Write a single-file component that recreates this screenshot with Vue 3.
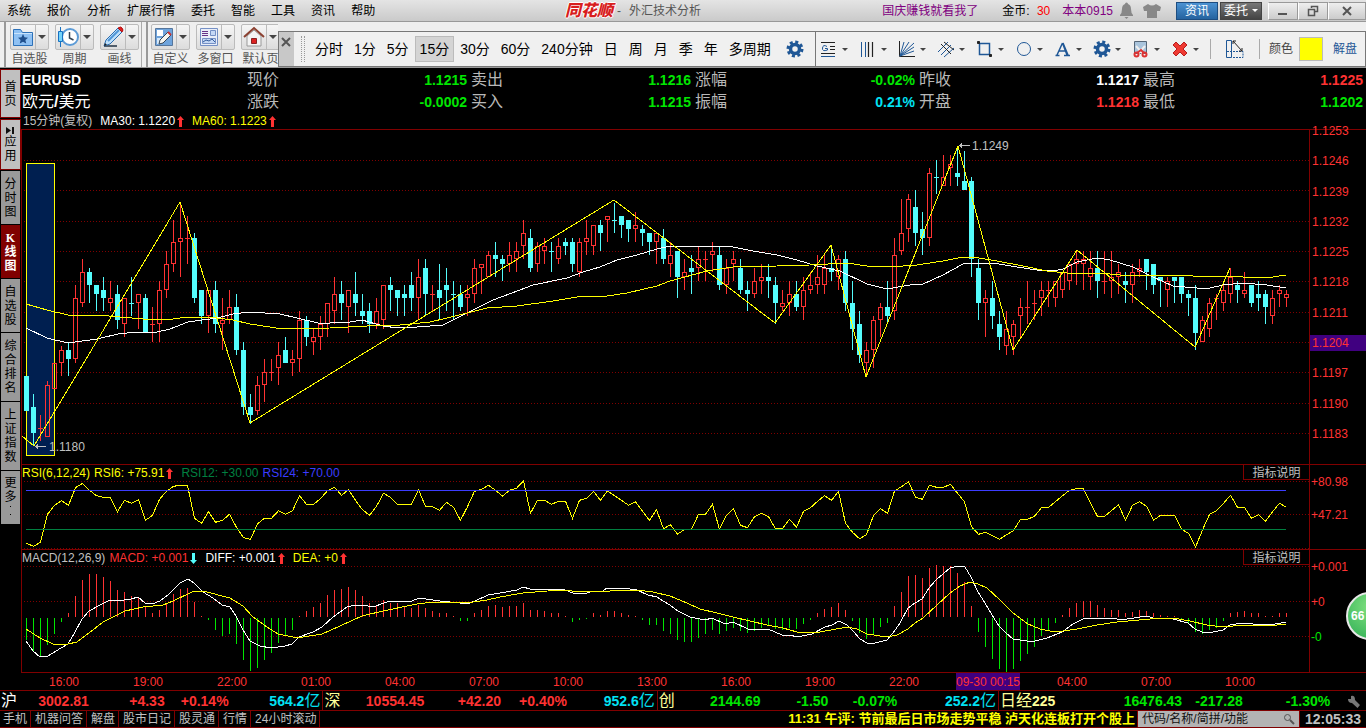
<script setup>
import { ref } from 'vue'

const menus = ['系统', '报价', '分析', '扩展行情', '委托', '智能', '工具', '资讯', '帮助']
const periods = ['分时', '1分', '5分', '15分', '30分', '60分', '240分钟', '日', '周', '月', '季', '年', '多周期']
const period = ref('15分')
const drawTools = ['text', 'bars', 'fan', 'channel', 'rect', 'circle', 'letter', 'gear', 'cut', 'remove']
const color = ref('#ffff00')
const query = ref('')

const tabs = [
  { name: '首页', kind: 'home', h: 49 },
  { name: '应用', kind: 'apps', h: 51 },
  { name: '分时图', kind: '', h: 53 },
  { name: 'K线图', kind: 'active', h: 53 },
  { name: '自选股', kind: '', h: 53 },
  { name: '综合排名', kind: '', h: 68 },
  { name: '上证指数', kind: '', h: 68 },
  { name: '更多', kind: 'more', h: 53 }
]

const quotes = [
  ['现价', '1.1215', 'down'], ['卖出', '1.1216', 'down'], ['涨幅', '-0.02%', 'down'], ['昨收', '1.1217', 'flat'], ['最高', '1.1225', 'up'],
  ['涨跌', '-0.0002', 'down'], ['买入', '1.1215', 'down'], ['振幅', '0.21%', 'info'], ['开盘', '1.1218', 'up'], ['最低', '1.1202', 'down']
]

const markets = [
  { id: 'sh', name: '沪', values: ['3002.81', '+4.33', '+0.14%'], vol: '564.2', dir: 'up' },
  { id: 'sz', name: '深', values: ['10554.45', '+42.20', '+0.40%'], vol: '952.6', dir: 'up' },
  { id: 'cy', name: '创', values: ['2144.69', '-1.50', '-0.07%'], vol: '252.2', dir: 'down' },
  { id: 'nk', name: '日经', code: '225', values: ['16476.43', '-217.28', '-1.30%'], vol: '', dir: 'down' }
]
const links = ['手机', '机器问答', '解盘', '股市日记', '股灵通', '行情', '24小时滚动']
const times = ['16:00', '19:00', '22:00', '01:00', '04:00', '07:00', '10:00', '13:00', '16:00', '19:00', '22:00', '09-30 00:15', '04:00', '07:00', '10:00']
const prices = ['1.1253', '1.1246', '1.1239', '1.1232', '1.1225', '1.1218', '1.1211', '1.1204', '1.1197', '1.1190', '1.1183']
const gridY = [160, 190, 221, 251, 281, 312, 342, 372, 403, 433]

// High, open, close, low in pips above 1.1180; a trailing "c" marks a falling doji.
const candles = `16 16 8 8,12 9 3 0,7 4 4 1,15 2 14 2,19 13 19 13,23 19 22 16,24 22 20 16,37 20 34 19,43 33 40 32,41 40 37 33,
37 37 35 31,39 36 34 31,38 33 34 31,37 35 29 27,34 28 34 25,39 33 33 30 c,35 33 35 27,35 34 26 26,32 28 28 24,38 28 36 24,
45 36 42 34,52 42 47 40,56 47 48 39,53 48 48 42,49 48 34 33,36 36 30 28,36 30 36 26,38 36 28 26,34 28 29 22,36 29 32 28,
35 32 22 21,24 22 9 7,12 9 7 5,16 8 14 7,20 14 17 10,20 17 17 15,24 18 21 14,25 22 19 19,22 19 20 16,31 20 29 17,
30 29 25 23,27 24 25 21,30 25 28 22,33 28 33 25,39 31 35 28,38 35 33 29,36 32 36 26,40 35 33 30,35 31 30 28,33 31 28 26,
34 28 31 27,37 29 37 27,39 37 36 31,36 36 34 30,37 35 34 30,40 37 34 31,43 34 39 29,43 41 35 30,37 35 35 31,42 36 34 29,
41 37 36 31,38 35 35 29 c,37 35 32 31,37 34 35 30,43 35 41 33,42 41 42 35,45 39 44 39,47 44 43 39,44 43 42 38,47 42 44 40,
47 43 45 40,52 46 49 43,50 48 41 40,47 42 46 40,48 45 46 42,47 45 45 40 c,48 43 46 42,48 47 46 44,48 47 42 40,48 40 47 39,
52 47 48 44,51 46 51 44,52 51 49 45,53 52 53 47,56 52 52 49 c,53 53 51 48,52 52 50 47,54 50 51 47,51 50 49 46,49 49 47 44,
49 47 49 42,50 48 43 42,47 42 44 39,45 45 39 34,43 39 40 36,44 41 40 35,46 41 43 38,45 43 43 38,47 44 45 40,46 44 37 36,
43 37 41 35,45 42 43 38,43 41 36 35,38 36 35 31,41 35 38 34,42 38 39 35,42 39 38 34,39 37 33 28,36 32 33 31,38 33 35 30,
38 35 32 31,39 32 36 29,40 36 37 35,44 37 39 35,44 37 41 35,46 41 40 38,44 39 43 36,45 43 33 31,38 33 27 22,31 28 21 19,
24 19 22 16,30 22 29 18,33 29 32 25,38 32 30 28,48 31 44 29,57 45 49 44,58 50 57 47,59 55 49 46,54 50 48 44,64 48 63 46,
66 62 62 58 c,67 60 62 60,67 64 65 60,69 63 62 60,68 61 59 59,62 61 43 39,43 41 33 29,36 33 34 25,38 34 30 27,31 28 25 22,
31 23 27 21,29 25 28 21,34 30 32 25,38 32 32 28,36 33 33 29,38 34 36 30,38 36 36 32,38 34 38 32,40 36 40 34,42 38 42 36,
45 42 43 37,45 42 43 36,45 39 41 36,45 41 38 34,45 38 38 35,45 38 39 34,42 39 40 35,40 38 37 33,42 37 40 33,43 40 41 39,
43 43 40 36,42 42 37 35,39 39 38 32,39 36 38 32,39 39 38 33,39 39 35 33,36 35 34 30,37 34 26 22,30 24 29 24,34 27 33 25,
35 34 34 29,37 33 36 31,41 35 39 33,38 37 36 33,40 35 36 34,37 37 33 32,38 35 34 31,36 35 32 28,36 30 34 28,37 35 36 32,36 34 35 32`
  .split(',').map(row => row.trim().split(' '))

const xOf = i => 26 + 7 * i
const yOf = p => Math.round(445.7 - 4.3333 * p)

let risePath = ''
let fallPath = ''
candles.forEach(([h, o, c, l, falling], i) => {
  const x = xOf(i)
  const top = yOf(Math.max(o, c))
  const bottom = yOf(Math.min(o, c))
  const high = yOf(h)
  const low = yOf(l)
  if (+c < +o || falling) {
    fallPath += `M${x} ${high}h1V${low}h-1z`
    fallPath += `M${x - 2} ${top}h5v${Math.max(bottom - top, 1)}h-5z`
  } else if (top === bottom) {
    risePath += `M${x + 0.5} ${high}V${low}M${x - 2} ${top + 0.5}h5`
  } else {
    risePath += `M${x + 0.5} ${high}V${top}M${x + 0.5} ${bottom}V${low}`
    risePath += `M${x - 1.5} ${top + 0.5}h4V${bottom - 0.5}h-4z`
  }
})

// RSI6 heights, counted down from the top of the pane in thirds of a pixel.
const rsi = [250, 259, 247, 163, 136, 122, 136, 83, 70, 91, 107, 112, 113, 155, 121, 130, 119, 181, 166, 118, 94, 79, 76, 76, 175, 190, 155, 187, 181, 163, 202, 233, 238, 191, 175, 175, 152, 163, 152, 107, 133, 133, 116, 92, 82, 106, 89, 121, 149, 166, 139, 100, 112, 133, 133, 133, 89, 139, 140, 151, 127, 142,
  181, 140, 94, 88, 76, 91, 108, 91, 85, 62, 160, 121, 121, 133, 124, 124, 175, 121, 115, 94, 121, 93, 107, 121, 136, 125, 154, 181, 149, 206, 194, 223, 208, 208, 163, 163, 133, 208, 166, 146, 196, 203, 170, 160, 170, 206, 206, 178, 202, 154, 143, 124, 107, 121, 94, 190, 217, 236, 224, 166, 146, 160, 93, 80,
  65, 112, 118, 76, 82, 82, 73, 100, 125, 200, 223, 217, 227, 238, 224, 212, 178, 178, 169, 143, 142, 125, 107, 91, 86, 86, 130, 169, 169, 152, 134, 181, 136, 125, 139, 181, 166, 166, 166, 208, 220, 262, 210, 163, 152, 130, 106, 142, 142, 175, 164, 184, 155, 130, 142]
const rsiPoints = rsi.map((v, i) => `${xOf(i) + 0.5},${(460 + v / 3).toFixed(1)}`).join(' ')

// MACD histogram, thirds of a pixel from the zero line; positive values point up.
const hist = [-68, -102, -116, -85, -50, -14, 11, 64, 112, 130, 130, 121, 109, 82, 76, 64, 60, 32, 11, 22, 40, 70, 85, 88, 46, 4, -8, -38, -56, -52, -80, -128, -161, -152, -128, -107, -77, -54, -38, 4, 19, 31, 43, 67, 82, 85, 91, 82, 64, 42, 37, 50, 43, 43, 32, 28, 37, 28, 18, 11, 11, 4,
  -11, -11, 11, 22, 34, 37, 31, 34, 34, 43, 22, 22, 19, 13, 11, 4, -14, -8, -5, 11, 7, 19, 19, 13, 7, 4, -8, -23, -23, -41, -50, -68, -74, -74, -62, -50, -38, -50, -41, -32, -41, -47, -41, -32, -26, -35, -38, -32, -35, -20, -8, 11, 25, 31, 43, 22, -11, -47, -65, -50, -29, -17, 34, 76,
  124, 127, 118, 148, 157, 154, 154, 133, 106, 34, -44, -89, -125, -155, -164, -155, -131, -110, -89, -58, -38, -17, 7, 28, 43, 49, 49, 37, 28, 22, 22, 13, 16, 22, 19, 11, 7, 3, 3, -5, -18, -44, -50, -38, -32, -11, 13, 16, 19, 11, 11, 3, 4, 13, 13]
const bars = sign => hist
  .map((v, i) => v * sign > 0 ? `M${xOf(i) + 0.5} ${sign > 0 ? 617 : 618}V${Math.round(617 - v / 3)}` : '')
  .join('')
const upBars = bars(1)
const downBars = bars(-1)

const ma30 = '26,328 47,338 68,343 97,339 118,334 137,332 157,332 170,329 188,322 217,318 233,314 250,312 280,314 297,318 318,323 330,323 350,322 362,320 383,326 398,328 417,327 443,325 467,313 493,300 520,290 533,285 567,278 583,272 600,267 617,260 637,255 657,249 670,246 713,246 733,247 753,251 777,255 797,260 817,266 840,271 867,284 887,289 910,285 923,284 943,275 963,264 967,263 993,263 1017,267 1037,270 1053,271 1063,269 1077,262 1097,258 1110,260 1133,267 1153,277 1173,286 1197,288 1210,288 1223,285 1243,283 1267,285 1286,288'
const ma60 = '26,304 47,310 68,315 97,315 143,319 173,319 187,317 217,318 233,320 250,324 283,329 330,328 367,326 400,325 430,322 447,318 467,313 487,308 517,306 553,301 583,296 607,296 627,293 657,286 670,281 707,271 733,267 777,266 810,265 847,263 867,266 890,267 917,265 943,261 963,257 973,257 997,261 1023,266 1047,271 1067,273 1100,273 1120,275 1177,275 1193,276 1233,276 1253,278 1273,277 1286,275'
const zigzag = '22,436 34,446 180,202 250,423 614,200 775,323 831,245 866,377 958,146 1013,350 1077,250 1195,347 1230,268'
const diff = '26,641 33,651 40,657 48,656 61,648 68,644 75,632 82,619 89,611 100,605 110,600 117,601 131,599 138,597 145,603 152,604 160,601 168,595 180,583 188,579 194,583 203,592 213,598 222,605 230,607 236,616 243,630 250,641 260,646 271,648 285,646 292,644 299,637 313,632 322,627 333,617 347,607 355,605 363,605 373,607 387,602 412,601 419,598 440,601 460,603 467,604 475,601 488,595 500,593 517,590 523,587 530,589 555,589 565,590 573,593 587,593 592,591 603,591 607,588 623,588 637,590 648,595 657,597 663,601 670,605 678,611 690,617 705,620 712,618 725,624 733,622 748,629 768,629 782,635 790,635 797,637 812,634 825,627 832,625 839,621 847,625 853,631 860,639 867,643 875,643 887,640 893,633 900,623 908,608 915,603 922,599 929,588 936,580 943,574 950,568 958,566 965,567 971,577 978,592 985,603 992,615 999,626 1006,633 1013,639 1027,641 1035,641 1047,638 1062,632 1073,624 1083,619 1092,618 1117,619 1127,619 1147,616 1153,618 1173,619 1188,623 1195,629 1202,632 1213,632 1223,630 1230,625 1243,623 1253,624 1270,625 1286,622'
const dea = '26,629 40,638 53,644 68,644 77,642 89,633 103,622 117,615 125,611 143,607 163,605 173,601 192,592 203,591 230,598 243,606 253,617 267,627 278,634 293,637 303,637 322,634 340,626 362,616 383,611 417,604 433,602 460,602 473,602 487,600 500,597 523,593 560,590 583,592 637,590 653,592 670,596 687,603 700,609 717,613 733,617 750,621 767,625 783,628 797,632 820,632 847,627 857,629 867,634 887,637 897,635 908,629 915,623 923,618 937,605 950,593 960,586 970,582 978,584 987,588 1000,600 1013,613 1028,624 1040,629 1050,631 1063,631 1077,629 1097,625 1117,622 1150,619 1173,618 1190,621 1207,625 1223,627 1243,625 1277,625 1286,624'
</script>

<template>
  <div class="app">
    <header class="titlebar">
      <nav class="menus">
        <button v-for="m in menus" :key="m" type="button">{{ m }}</button>
      </nav>
      <div class="brand"><strong>同花顺</strong><span class="dash">-</span><span>外汇技术分析</span></div>
      <div class="account">
        <a href="#" class="promo">国庆赚钱就看我了</a>
        <span class="coins">金币: <b>30</b></span>
        <a href="#" class="user">本本0915</a>
        <svg class="bell" width="15" height="17" viewBox="0 0 15 17"><path fill="#888" d="M6 2a1.500 1.500 0 0 1 3 0q3 1 3 5 0 4 2 6v1H1v-1q2-2 2-6 0-4 3-5zM5.500 15h4l-2 2z" /></svg>
        <svg class="shirt" width="20" height="16" viewBox="0 0 20 16"><path fill="#888" d="M6 1q4 3 8 0l5 3-1 4-3 0v7H5V8L2 8 1 4z" /></svg>
      </div>
      <button type="button" class="news">资讯</button>
      <button type="button" class="trade">委托<i class="caret"></i></button>
      <div class="winbtns">
        <button type="button" aria-label="最小化"><svg width="12" height="12"><path d="M1 8h9v2H1z" fill="#555" /></svg></button>
        <button type="button" aria-label="还原"><svg width="12" height="12" fill="none" stroke="#555"><path d="M4.500 3V1.500h6v5H8M1.500 4.500h6v6h-6z" stroke-width="1.500" /></svg></button>
        <button type="button" aria-label="关闭"><svg width="12" height="12"><path d="M2 2l8 8M10 2l-8 8" stroke="#555" stroke-width="2" /></svg></button>
      </div>
    </header>

    <div class="toolbar">
      <div class="group">
        <div class="tool">
          <button type="button" aria-labelledby="t1" class="split">
            <svg width="24" height="24" viewBox="0 0 24 24"><path d="M2.500 4.500h7l2 3h10v13h-19z" fill="#8fc1f3" stroke="#2d71b8" /><path d="M3 8h18v1H3z" fill="#c9e3fb" /><path d="M12 9l1.500 3.300 3.500.400-2.600 2.300.800 3.500L12 16.700 8.800 18.500l.800-3.500L7 12.700l3.500-.400z" fill="#1f4f8c" /></svg>
            <i class="caret"></i>
          </button><span id="t1">自选股</span>
        </div>
        <div class="tool">
          <button type="button" aria-labelledby="t2" class="split">
            <svg width="24" height="24" viewBox="0 0 24 24"><circle cx="14" cy="12" r="8" fill="#fff" stroke="#5c9bd6" stroke-width="2" /><path d="M13.500 7v6l4 2" fill="none" stroke="#345" stroke-width="1.500" /><path d="M4.500 2v20" stroke="#1771c2" /><path d="M2.500 6.500h4v10h-4z" fill="#73d3fa" stroke="#1771c2" /></svg>
            <i class="caret"></i>
          </button><span id="t2">周期</span>
        </div>
        <div class="tool">
          <button type="button" aria-labelledby="t3" class="split">
            <svg width="24" height="24" viewBox="0 0 24 24"><path d="M3 21h13" stroke="#234" stroke-width="1.500" /><path d="M17 3l4 4L9 19l-6 2 2-6z" fill="#bfe0fa" stroke="#2a6db0" /><path d="M7 16L18 5" stroke="#4f95d6" stroke-width="2" /><path d="M17 3q3-2 4 0 2 2 0 4l-4-4z" fill="#e02020" stroke="#b01010" /><path d="M3 21l1-3 2 2z" fill="#222" /></svg>
            <i class="caret"></i>
          </button><span id="t3">画线</span>
        </div>
      </div>
      <div class="group second">
        <div class="tool">
          <button type="button" aria-labelledby="t4" class="split">
            <svg width="24" height="24" viewBox="0 0 24 24"><path d="M3.500 3.500h17v17h-17z" fill="#6fa4dc" stroke="#56769c" /><path d="M5 5h6v6H5z" fill="#fff" /><path d="M5 13h5v6H5z" fill="#d7e8f8" /><path d="M16 7l3 3-8 8-4 1 1-4z" fill="#f7f5ef" stroke="#345" /><path d="M16 7l3 3" stroke="#c33" stroke-width="2" /></svg>
            <i class="caret"></i>
          </button><span id="t4">自定义</span>
        </div>
        <div class="tool">
          <button type="button" aria-labelledby="t5" class="split">
            <svg width="24" height="24" viewBox="0 0 24 24"><path d="M3.500 3.500h17v17h-17z" fill="#e9eef8" stroke="#7590c5" /><path d="M5 6.500h6M5 8.500h6M5 10.500h6" stroke="#638" /><path d="M13.500 5.500h5v5h-5zM5.500 13.500h13v5h-13z" fill="#c5d8f5" stroke="#7590c5" /><path d="M6 17l3-2 3 1 3-2 3 3" fill="none" stroke="#345c9c" /></svg>
            <i class="caret"></i>
          </button><span id="t5">多窗口</span>
        </div>
        <div class="tool">
          <button type="button" aria-labelledby="t6" class="split">
            <svg width="24" height="24" viewBox="0 0 24 24"><path d="M5 11l7-6 7 6v10H5z" fill="#f4f4f4" stroke="#999" /><path d="M2 12L12 3l10 9" fill="none" stroke="#8b4030" stroke-width="2" /><path d="M9.500 13.500h5v5h-5z" fill="#d22" stroke="#822" /></svg>
            <i class="caret"></i>
          </button><span id="t6">默认页</span>
        </div>
      </div>
      <div class="periodbar">
        <button type="button" class="close" aria-label="关闭工具条"><svg width="10" height="10"><path d="M1 1l8 8M9 1L1 9" stroke="#555" stroke-width="2" /></svg></button>
        <span class="grip"></span>
        <div class="periods">
          <button v-for="p in periods" :key="p" type="button" :class="{ on: p === period }" @click="period = p">{{ p }}</button>
        </div>
        <button type="button" class="gear" aria-label="设置">
          <svg width="18" height="18" viewBox="0 0 18 18"><circle cx="9" cy="9" r="7" fill="none" stroke="#1f5796" stroke-width="3" stroke-dasharray="3 2.500" /><circle cx="9" cy="9" r="4.500" fill="none" stroke="#1f5796" stroke-width="3.500" /></svg>
        </button>
        <div class="draws">
          <button v-for="t in drawTools" :key="t" type="button" :aria-label="t">
            <svg width="18" height="18" viewBox="0 0 18 18" fill="none" stroke="#222">
              <template v-if="t === 'text'"><path d="M1 2.500h14M1 13.500h14M10 6.500h5M10 9.500h5" /><path d="M1 16.500h14M7 6.500Q3 4 2.500 8T7.500 10V8.500H5" stroke="#1f5796" /></template>
              <template v-else-if="t === 'bars'"><path d="M2.500 2v15M6.500 2v15" stroke="#1f5796" /><path d="M9.500 2v15M13.500 2v15" stroke-width="1.200" /></template>
              <template v-else-if="t === 'fan'"><path d="M1.500 1v15.500H17" /><path d="M2 16L6 2M2 16L11 2M2 16L16 3M2 16l14-9M2 16l14-5" stroke="#1f5796" /></template>
              <template v-else-if="t === 'channel'"><path d="M1 12L11 2M4 15L14 5M7 17L17 8" stroke="#1f5796" /><path d="M4 4l10 10M7 2l10 8" /></template>
              <template v-else-if="t === 'rect'"><path d="M3.500 3.500h10v11h-10z" stroke="#1f5796" stroke-width="1.500" /><path d="M1.500 1.500h2v2h-2zM13.500 14.500h2v2h-2z" fill="#222" /></template>
              <circle v-else-if="t === 'circle'" cx="9" cy="9" r="6.500" stroke="#1f5796" />
              <path v-else-if="t === 'letter'" d="M1.500 15.500h4M10 15.500h6M3 15L8.500 3M5 11h7M8.500 3l4.500 12M9 3l5 12" stroke="#1f5796" stroke-width="1.500" />
              <template v-else-if="t === 'gear'"><circle cx="9" cy="9" r="7" stroke="#1f5796" stroke-width="3" stroke-dasharray="3 2.500" /><circle cx="9" cy="9" r="4.500" stroke="#1f5796" stroke-width="3.500" /></template>
              <template v-else-if="t === 'cut'"><path d="M2.500 1.500h12v12h-12z" fill="#a9c4dc" stroke="#567" /><path d="M4 6l7 8M13 6l-7 8" stroke="#eee" stroke-width="2" /><circle cx="4.500" cy="14.500" r="2" stroke="#d33" stroke-width="2" /><circle cx="12.500" cy="14.500" r="2" stroke="#d33" stroke-width="2" /><path d="M5 13l4-3 3 3" stroke="#d33" stroke-width="2" /></template>
              <path v-else d="M2 5l3-3 4 4 4-4 3 3-4 4 4 4-3 3-4-4-4 4-3-3 4-4z" fill="#ee3a32" stroke="#b81d1d" />
            </svg>
            <i class="caret"></i>
          </button>
        </div>
        <button type="button" class="measure" aria-label="测量">
          <svg width="20" height="20" viewBox="0 0 20 20" fill="none" stroke="#1f5796"><path d="M1.500 1.500h5v17h-5z" /><path d="M2 12.500h16v6H7" stroke-dasharray="2 1" /><path d="M8 2l9 10M8 5V2h3M17 9v3h-3" stroke="#222" /></svg>
        </button>
        <label class="colour">颜色 <input v-model="color" type="color"></label>
        <a href="#" class="explain">解盘</a>
      </div>
    </div>

    <div class="main">
      <aside class="tabs">
        <button v-for="t in tabs" :key="t.name" type="button" :class="t.kind" :style="{ height: t.h + 'px' }">
          <svg v-if="t.kind === 'apps'" width="9" height="9"><path d="M0 1l5 3.500L0 8zM6 1h2v7H6z" fill="#111" /></svg>
          <span>{{ t.name }}</span>
          <template v-if="t.kind === 'more'"><i></i><i></i></template>
        </button>
      </aside>

      <main class="content">
        <section class="quotes">
          <h1>EURUSD</h1>
          <template v-for="(q, i) in quotes" :key="q[0]">
            <h2 v-if="i === 5">欧元<b>/</b>美元</h2>
            <div class="quote"><span>{{ q[0] }}</span><b :class="q[2]">{{ q[1] }}</b></div>
          </template>
        </section>
        <div class="legend">
          <span class="grey">15分钟(复权)</span>
          <span class="white gap8">MA30: 1.1220</span><svg class="arrow" viewBox="0 0 7 11"><path d="M3.500 0L7 4H5v7H2V4H0z" fill="#ff3232" /></svg>
          <span class="yellow gap8">MA60: 1.1223</span><svg class="arrow" viewBox="0 0 7 11"><path d="M3.500 0L7 4H5v7H2V4H0z" fill="#ff3232" /></svg>
        </div>

        <section class="pane price">
          <svg class="plot" viewBox="22 130 1287 334" preserveAspectRatio="none" shape-rendering="crispEdges">
            <path v-for="y in gridY" :key="y" class="grid" :d="`M24 ${y + 0.5}H1309`" />
            <rect x="26.500" y="163.500" width="28" height="292" fill="#001f50" stroke="#ffff00" />
            <path :d="fallPath" fill="#54fcfc" />
            <path :d="risePath" fill="none" stroke="#ff3232" />
            <polyline :points="ma30" class="line w" />
            <polyline :points="ma60" class="line y" />
            <polyline :points="zigzag" class="line y" />
            <path d="M35 446.500h11M37 444v5M36 445v3M959 145.500h11M961 143v5M960 144v3" stroke="#c0c0c0" />
            <text x="49" y="451">1.1180</text>
            <text x="972" y="150">1.1249</text>
          </svg>
          <ul class="scale">
            <li v-for="p in prices" :key="p" :class="{ mark: p === '1.1204' }">{{ p }}</li>
          </ul>
        </section>

        <section class="pane rsi">
          <div class="plotbox">
            <svg class="plot" viewBox="22 465 1287 84" preserveAspectRatio="none" shape-rendering="crispEdges">
              <path class="grid" d="M24 481.500H1309M24 514.500H1309M24 548.500H1309" />
              <polyline :points="rsiPoints" class="line y" />
              <path d="M26 490.500H1286" stroke="#3c3cff" />
              <path d="M26 529.500H1286" stroke="#008040" />
            </svg>
            <div class="legend over">
              <span class="yellow">RSI(6,12,24)</span><span class="yellow gap4">RSI6: +75.91</span><svg class="arrow" viewBox="0 0 7 11"><path d="M3.500 0L7 4H5v7H2V4H0z" fill="#ff3232" /></svg>
              <span class="green gap8">RSI12: +30.00</span><span class="blue gap4">RSI24: +70.00</span>
            </div>
            <button type="button" class="help">指标说明</button>
          </div>
          <ul class="scale"><li>+80.98</li><li>+47.21</li></ul>
        </section>

        <section class="pane macd">
          <div class="plotbox">
            <svg class="plot" viewBox="22 550 1287 122" preserveAspectRatio="none" shape-rendering="crispEdges">
              <path class="grid" d="M24 566.500H1309M24 601.500H1309M24 636.500H1309" />
              <path :d="upBars" stroke="#ff3232" />
              <path :d="downBars" stroke="#00e600" />
              <polyline :points="diff" class="line w" />
              <polyline :points="dea" class="line y" />
            </svg>
            <div class="legend over">
              <span class="grey">MACD(12,26,9)</span><span class="red gap4">MACD: +0.001</span><svg class="arrow" viewBox="0 0 7 11"><path d="M3.500 11L7 7H5V0H2v7H0z" fill="#54fcfc" /></svg>
              <span class="white gap8">DIFF: +0.001</span><svg class="arrow" viewBox="0 0 7 11"><path d="M3.500 0L7 4H5v7H2V4H0z" fill="#ff3232" /></svg>
              <span class="yellow gap8">DEA: +0</span><svg class="arrow" viewBox="0 0 7 11"><path d="M3.500 0L7 4H5v7H2V4H0z" fill="#ff3232" /></svg>
            </div>
            <button type="button" class="help">指标说明</button>
          </div>
          <ul class="scale"><li>+0.001</li><li>+0</li><li class="neg">-0</li></ul>
        </section>

        <div class="times">
          <span v-for="(t, i) in times" :key="i" :class="{ mark: i === 11 }">{{ t }}</span>
        </div>
      </main>
    </div>

    <section class="indices">
      <div v-for="m in markets" :key="m.id" class="market" :class="[m.id, m.dir]">
        <span class="name">{{ m.name }}<b v-if="m.code">{{ m.code }}</b></span>
        <b v-for="v in m.values" :key="v">{{ v }}</b>
        <span v-if="m.vol" class="vol"><b>{{ m.vol }}</b>亿</span>
        <button v-else type="button" class="wrench" aria-label="指数设置">
          <svg width="13" height="13" viewBox="0 0 13 13"><path d="M1 4l3 0V1q4-1 4 4l5 5-2.500 3L5 8Q1 8 1 4z" fill="#777" /></svg>
        </button>
      </div>
    </section>

    <footer class="status">
      <nav><a v-for="l in links" :key="l" href="#">{{ l }}</a></nav>
      <a href="#" class="ticker">11:31 午评: 节前最后日市场走势平稳 泸天化连板打开个股上</a>
      <form class="search" @submit.prevent>
        <input v-model="query" type="text" aria-label="搜索" placeholder="代码/名称/简拼/功能">
        <button type="submit" aria-label="查找"><svg width="12" height="12" viewBox="0 0 12 12" fill="none" stroke="#555"><circle cx="4.500" cy="4.500" r="3" /><path d="M7 7l4 4" stroke-width="2" /></svg></button>
      </form>
      <time>12:05:33</time>
    </footer>

    <button type="button" class="score">66</button>
  </div>
</template>

<style>
html, body { background: #000; overflow: hidden; }
</style>

<style scoped>
* { box-sizing: border-box; }
.app {
  position: relative; display: flex; flex-direction: column; min-height: 100vh; overflow: hidden;
  background: #000; color: #c0c0c0;
  font: 12px/16px "Liberation Sans", "Noto Sans CJK SC", sans-serif; white-space: nowrap;
}
button { padding: 0; border: 0; background: none; color: inherit; font: inherit; white-space: nowrap; }
a { color: inherit; text-decoration: none; }
svg { display: block; flex: none; }
h1, h2, ul { margin: 0; padding: 0; list-style: none; }
.caret { border: 4px solid transparent; border-top-color: #444; border-bottom: 0; flex: none; }

.titlebar { display: flex; align-items: center; height: 22px; background: linear-gradient(#e4e4e4, #cacaca); border-bottom: 1px solid #999; color: #000; padding-left: 7px; }
.menus { display: flex; gap: 16px; width: 558px; }
.brand { display: flex; align-items: center; color: #555; }
.brand strong { color: #d81e1e; font-size: 16px; font-weight: 900; font-style: italic; text-shadow: 1px 0 #fff, -1px 0 #fff, 0 1px #fff, 0 -1px #fff; }
.dash { padding: 0 8px 0 4px; }
.account { display: flex; align-items: center; margin-left: auto; margin-right: 14px; }
.promo, .user { color: #800080; }
.coins { margin: 0 12px 0 24px; }
.coins b { color: #f00; font-weight: 400; padding-left: 4px; }
.bell { margin: 0 8px 0 6px; }
.news, .trade { height: 18px; width: 42px; border: 1px solid #1d4d80; background: linear-gradient(#4b92d2, #25639f); color: #fff; margin-right: 2px; line-height: 16px; }
.trade { display: flex; align-items: center; justify-content: center; gap: 4px; border-color: #444; background: linear-gradient(#777, #444); margin-right: 6px; }
.trade .caret { border-width: 3px; border-bottom: 0; border-top-color: #fff; }
.winbtns { display: flex; height: 18px; }
.winbtns button { width: 30px; display: flex; align-items: center; justify-content: center; border: 1px solid #999; border-left-color: #fff; background: linear-gradient(#eee, #ccc); }
.winbtns button:last-child { width: 38px; }

.toolbar { display: flex; height: 46px; background: #efefef; color: #555; border-bottom: 1px solid #999; }
.group { display: flex; gap: 6px; padding: 2px 3px 0 4px; margin-left: 4px; width: 138px; border-left: 2px solid #999; border-right: 1px solid #aaa; flex: none; }
.second { width: 132px; border-right: 0; overflow: hidden; padding-left: 3px; }
.tool { width: 39px; flex: none; display: flex; flex-direction: column; align-items: center; gap: 1px; }
.split { display: flex; align-items: center; width: 39px; height: 26px; border: 1px solid #bbb; border-radius: 2px; background: linear-gradient(#f6f6f6, #dcdcdc); }
.split svg { width: 25px; border-right: 1px solid #bbb; }
.split .caret { margin-left: 2px; }
.periodbar { flex: 1; min-width: 0; margin-top: 9px; display: flex; align-items: center; border: 1px solid #777; background: #f0f0f0; color: #000; font-size: 14px; }
.close { display: flex; align-self: stretch; width: 15px; padding: 5px 2px; background: #c8c8c8; }
.grip { width: 4px; height: 26px; margin-left: 7px; border: 1px dotted #999; border-width: 0 1px; }
.periods { display: flex; gap: 1px; margin-left: 5px; }
.periods button { height: 26px; padding: 0 4px; border: 1px solid transparent; font-size: 14px; }
.periods button.on { background: #d4d4d4; border-color: #bbb; }
.gear { padding: 0 11px 0 8px; margin-left: auto; }
.draws { display: flex; align-self: stretch; align-items: center; border-left: 1px solid #777; padding-left: 4px; }
.draws button { display: flex; align-items: center; gap: 4px; width: 39px; height: 24px; }
.draws .caret { border-width: 3px; border-bottom: 0; }
.measure { display: flex; justify-content: center; width: 50px; height: 20px; border: 1px solid #aaa; border-width: 0 1px; }
.colour { display: flex; align-items: center; gap: 6px; margin-left: 9px; font-size: 12px; color: #444; }
.colour input { width: 24px; height: 24px; padding: 0; border: 1px solid #bbb; background: none; }
.colour input::-webkit-color-swatch-wrapper { padding: 0; }
.colour input::-webkit-color-swatch { border: 0; }
.explain { margin: 0 8px 0 10px; font-size: 12px; color: #1f5796; }

.main { flex: 1; display: flex; min-height: 0; }
.tabs { width: 21px; flex: none; display: flex; flex-direction: column; gap: 1px; padding-top: 1px; }
.tabs button { width: 19px; margin-left: 1px; display: flex; flex-direction: column; align-items: center; justify-content: center; background: #999; color: #000; font-size: 12px; line-height: 14px; }
.tabs span { width: 12px; white-space: normal; word-break: break-all; }
.tabs i { width: 1px; height: 1px; margin: 2px 0 5px; background: #000; }
.tabs .home, .tabs .apps { width: 21px; margin-left: 0; background: #c0c0c0; border: 1px solid #800000; }
.tabs .active { background: #800000; color: #fff; font-weight: 700; font-family: "Liberation Serif", "Noto Sans CJK SC", serif; text-align: center; }

.content { flex: 1; min-width: 0; display: flex; flex-direction: column; }
.quotes { display: grid; grid-template-columns: repeat(6, 1fr); grid-auto-rows: 22px; padding: 1px 0 0 1px; font-size: 14px; line-height: 22px; }
.quotes h1 { font-size: 14px; line-height: 22px; color: #fff; }
.quotes h2 { font-size: 16px; line-height: 22px; font-weight: 400; color: #fff; }
.quote { display: flex; justify-content: space-between; padding: 0 3px 0 1px; }
.quote span { font-size: 16px; color: #b8b8b8; }
.up { color: #ff3232; }
.down { color: #00e600; }
.flat { color: #fff; }
.info { color: #02e2f4; }
.legend { display: flex; align-items: center; height: 16px; padding-left: 2px; }
.grey { color: #c0c0c0; } .white { color: #fff; } .yellow { color: #ffff00; } .green { color: #008040; } .blue { color: #3c3cff; } .red { color: #ff3232; }
.gap8 { margin-left: 8px; }
.gap4 { margin-left: 4px; }
.arrow { width: 7px; height: 11px; margin-left: 2px; }

.pane { display: flex; border-top: 1px solid #800000; border-left: 1px solid #800000; min-height: 0; }
.price { flex: 1; }
.plot { flex: 1; min-width: 0; width: 100%; height: 100%; }
.plotbox { flex: 1; min-width: 0; position: relative; }
.rsi { height: 85px; }
.macd { height: 123px; }
.grid { stroke: #800000; stroke-dasharray: 1 2; fill: none; }
.line { fill: none; stroke-width: 1; }
.line.w { stroke: #fff; }
.line.y { stroke: #ffff00; }
text { fill: #c0c0c0; font-size: 12px; }
.over { position: absolute; left: 0; top: 0; padding-left: 0; }
.help { position: absolute; right: 0; top: 0; width: 66px; height: 15px; line-height: 16px; border: 1px solid #800000; border-width: 0 0 1px 1px; background: #000; color: #c0c0c0; }
.scale { width: 57px; flex: none; display: flex; flex-direction: column; border-left: 1px solid #800000; color: #ff3232; }
.scale li { padding-left: 2px; height: 16px; }
.price .scale { justify-content: space-between; padding-bottom: 22px; }
.price .scale li:first-child { margin-top: -7px; }
.scale .mark, .times .mark { background: #400080; }
.rsi .scale { padding-top: 9px; gap: 17px; }
.macd .scale { padding-top: 9px; gap: 19px; }
.rsi .scale li, .macd .scale li { padding-left: 1px; }
.neg { color: #00e600; }
.times { display: grid; grid-template-columns: repeat(16, 1fr); height: 18px; border-top: 1px solid #800000; padding-left: 1px; color: #ff3232; line-height: 18px; }
.times span { justify-self: center; }

.indices { display: flex; height: 20px; border-top: 1px solid #800000; font-size: 14px; line-height: 20px; }
.market { display: grid; align-items: center; text-align: right; border-right: 1px solid #800000; padding-right: 2px; }
.market:last-child { border: 0; }
.sh { flex: 323; grid-template-columns: 18px 71fr 76fr 64fr 92fr; }
.sz { flex: 334; grid-template-columns: 18px 83fr 77fr 66fr 88fr; }
.cy { flex: 341; grid-template-columns: 18px 85fr 68fr 69fr 99fr; }
.nk { flex: 368; grid-template-columns: 58px 126fr 61fr 88fr 34fr; }
.name { font-size: 16px; text-align: left; padding-left: 1px; color: #ffff99; }
.name b { font-size: 14px; }
.sh .name { color: #fff; }
.vol { font-size: 16px; color: #02e2f4; }
.vol b { font-size: 14px; }
.wrench { justify-self: end; padding-right: 4px; }

.status { display: flex; height: 18px; border: 1px solid #800000; border-width: 1px 0; line-height: 16px; }
.status nav { display: flex; }
.status nav a { padding: 0 3px 0 4px; border-right: 1px solid #800000; color: #c0c0c0; }
.status nav a:first-child { padding-left: 3px; }
.ticker { margin-left: auto; padding-right: 2px; color: #ffff00; font-size: 13px; font-weight: 700; }
.search { display: flex; align-items: center; width: 163px; background: #b3b3b3; border: 1px solid #800000; border-width: 0 1px; }
.search input { flex: 1; min-width: 0; height: 16px; padding: 0 0 0 4px; border: 0; outline: 0; background: none; font: inherit; color: #111; }
.search input::placeholder { color: #111; opacity: 1; }
.search button { padding-right: 4px; }
.status time { width: 66px; text-align: center; font-size: 14px; font-weight: 700; }
.score { position: absolute; right: -28px; top: 592px; width: 48px; height: 48px; border-radius: 50%; border: 2px solid #e8e8e8; background: radial-gradient(circle at 50% 30%, #7fe07f, #2fae55); color: #fff; font-weight: 700; text-align: left; padding-left: 3px; }
</style>
